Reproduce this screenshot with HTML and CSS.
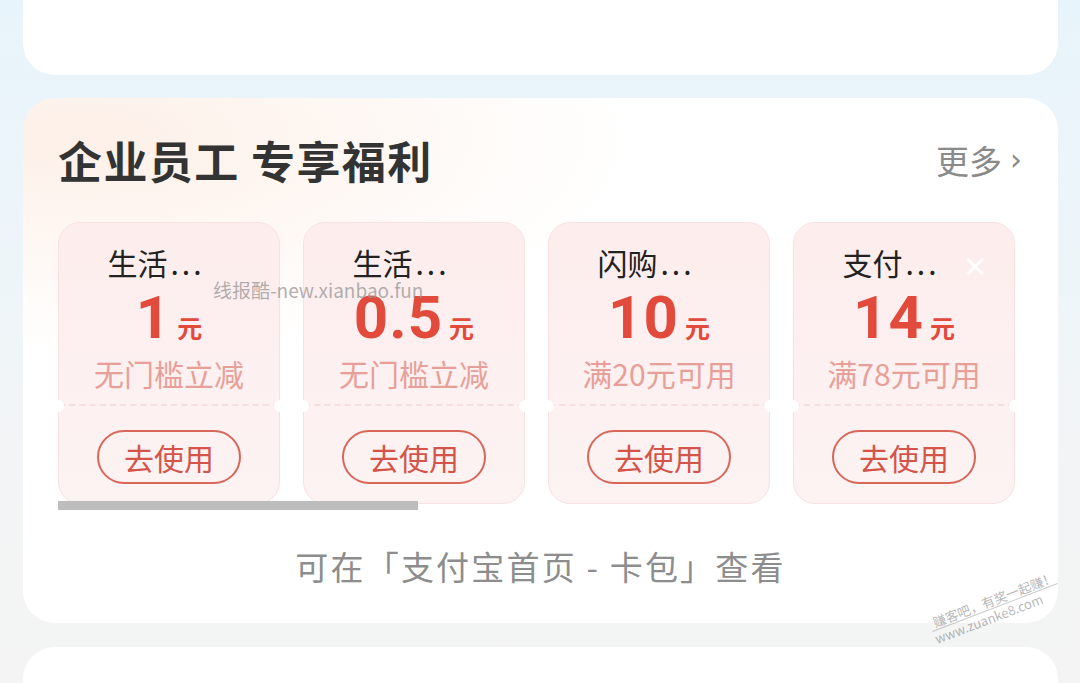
FILE: index.html
```html
<!DOCTYPE html>
<html lang="zh-CN">
<head>
  <meta charset="UTF-8">
  <meta name="viewport" content="width=device-width, initial-scale=1.0">
  <title>企业员工 专享福利</title>
  <link rel="stylesheet" href="styles.css">
</head>
<body>
  <div class="panel panel-top"></div>

  <div class="panel benefits">
    <div class="benefits-head">
      <h2>企业员工 专享福利</h2>
      <a class="more" href="#">更多<span class="chevron">›</span></a>
    </div>

    <div class="coupon-list">
      <div class="coupon">
        <div class="coupon-main">
          <div class="coupon-name">生活<span class="dots">...</span></div>
          <div class="coupon-amount"><span class="num">1</span><span class="unit">元</span></div>
          <div class="coupon-rule">无门槛立减</div>
        </div>
        <div class="coupon-foot"><button class="use-btn">去使用</button></div>
      </div>

      <div class="coupon">
        <div class="coupon-main">
          <div class="coupon-name">生活<span class="dots">...</span></div>
          <div class="coupon-amount"><span class="num">0.5</span><span class="unit">元</span></div>
          <div class="coupon-rule">无门槛立减</div>
        </div>
        <div class="coupon-foot"><button class="use-btn">去使用</button></div>
      </div>

      <div class="coupon">
        <div class="coupon-main">
          <div class="coupon-name">闪购<span class="dots">...</span></div>
          <div class="coupon-amount"><span class="num">10</span><span class="unit">元</span></div>
          <div class="coupon-rule">满20元可用</div>
        </div>
        <div class="coupon-foot"><button class="use-btn">去使用</button></div>
      </div>

      <div class="coupon">
        <span class="close">×</span>
        <div class="coupon-main">
          <div class="coupon-name">支付<span class="dots">...</span></div>
          <div class="coupon-amount"><span class="num">14</span><span class="unit">元</span></div>
          <div class="coupon-rule">满78元可用</div>
        </div>
        <div class="coupon-foot"><button class="use-btn">去使用</button></div>
      </div>
    </div>

    <div class="scroll-thumb"></div>

    <p class="benefits-tip">可在「支付宝首页 - 卡包」查看</p>

    <span class="mark-xb">线报酷-new.xianbao.fun</span>
  </div>

  <div class="panel panel-next"></div>

  <div class="mark-zk">
    <span>赚客吧，有奖一起赚！</span>
    <span>www.zuanke8.com</span>
  </div>
</body>
</html>
```

FILE: styles.css
```css
body {
  margin: 0;
  height: 683px;
  overflow: hidden;
  position: relative;
  font-family: "Noto Sans CJK SC", "Noto Sans", sans-serif;
  background: linear-gradient(#e8f4fb 0, #edf5f9 260px, #f3f4f5 480px, #f4f4f4 100%);
  padding: 0 22px 0 23px;
}

.panel {
  background: #fff;
  border-radius: 32px;
}

.panel-top {
  height: 75px;
  border-radius: 0 0 32px 32px;
}

.benefits {
  position: relative;
  margin-top: 23px;
  height: 525px;
  padding: 0 0 0 35px;
  box-sizing: border-box;
  overflow: hidden;
  background:
    radial-gradient(ellipse 560px 220px at 60px 40px, #fdf0e8 0, rgba(253, 240, 232, 0.6) 40%, rgba(255, 255, 255, 0) 100%),
    #fff;
}

.benefits-head {
  display: flex;
  align-items: center;
  justify-content: space-between;
  height: 124px;
  padding-right: 36px;
}

.benefits-head h2 {
  margin: 0;
  font-size: 44px;
  font-weight: 700;
  color: #333;
  letter-spacing: 1.4px;
}

.more {
  display: flex;
  align-items: center;
  color: #8a8a8a;
  font-size: 33px;
  text-decoration: none;
}

.chevron {
  font-family: "DejaVu Sans", sans-serif;
  font-size: 30px;
  margin-left: 8px;
  margin-top: -2px;
}

.coupon-list {
  display: flex;
  gap: 23px;
}

.coupon {
  position: relative;
  flex: 0 0 222px;
  height: 282px;
  box-sizing: border-box;
  border: 1.5px solid #f8e1e1;
  border-radius: 22px;
  background: linear-gradient(#fdeded, #fdf3f3);
  display: flex;
  flex-direction: column;
}

/* ticket notches on the cut line */
.coupon::before,
.coupon::after {
  content: "";
  position: absolute;
  top: 177px;
  width: 12px;
  height: 12px;
  border-radius: 50%;
  background: #fff;
}

.coupon::before { left: -7px; }
.coupon::after { right: -7px; }

.coupon-main {
  height: 183px;
  box-sizing: border-box;
  padding-top: 20px;
  text-align: center;
  border-bottom: 2px dashed #f6dede;
}

.coupon-name {
  font-size: 30px;
  line-height: 38px;
  color: #222;
  padding-right: 26px;
}

.coupon-name .dots {
  letter-spacing: 3px;
  margin-left: 3px;
}

.coupon-amount {
  height: 64px;
  line-height: 64px;
  margin-top: 5px;
  color: #e24a3b;
  font-weight: 700;
}

.coupon-amount .num {
  font-family: Roboto, "Liberation Sans", sans-serif;
  font-size: 60px;
  letter-spacing: 1px;
}

.coupon-amount .unit {
  font-size: 25px;
  margin-left: 6px;
}

.coupon-rule {
  margin-top: 3px;
  font-size: 30px;
  line-height: 40px;
  color: #e7a099;
}

.coupon-foot {
  flex: 1;
  display: flex;
  align-items: center;
  justify-content: center;
  padding-top: 4px;
}

.use-btn {
  width: 144px;
  height: 54px;
  border: 2px solid #d86659;
  border-radius: 27px;
  background: transparent;
  color: #d4544a;
  font-family: inherit;
  font-size: 30px;
  padding: 0;
}

.close {
  position: absolute;
  top: 28px;
  right: 26px;
  color: #fff;
  font-size: 30px;
  line-height: 30px;
  font-family: "DejaVu Sans", sans-serif;
}

.scroll-thumb {
  width: 360px;
  height: 9px;
  margin-top: -3px;
  background: #bdbdbd;
  position: relative;
}

.benefits-tip {
  margin: 32px 0 0 -35px;
  text-align: center;
  font-size: 33px;
  color: #8d8d8d;
  letter-spacing: 2.2px;
}

.mark-xb {
  position: absolute;
  left: 190px;
  top: 178px;
  font-family: "Noto Sans CJK SC", "Noto Sans", sans-serif;
  font-size: 19px;
  color: rgba(150, 150, 150, 0.75);
}

.panel-next {
  margin-top: 24px;
  height: 36px;
  border-radius: 32px 32px 0 0;
}

.mark-zk {
  position: absolute;
  left: 928px;
  top: 592px;
  display: flex;
  flex-direction: column;
  align-items: flex-start;
  transform: rotate(-21deg);
  font-size: 13px;
  line-height: 15px;
  color: rgba(120, 120, 120, 0.55);
}

.mark-zk span:first-child {
  border-bottom: 1px solid rgba(150, 150, 150, 0.5);
  padding-left: 4px;
}
```
